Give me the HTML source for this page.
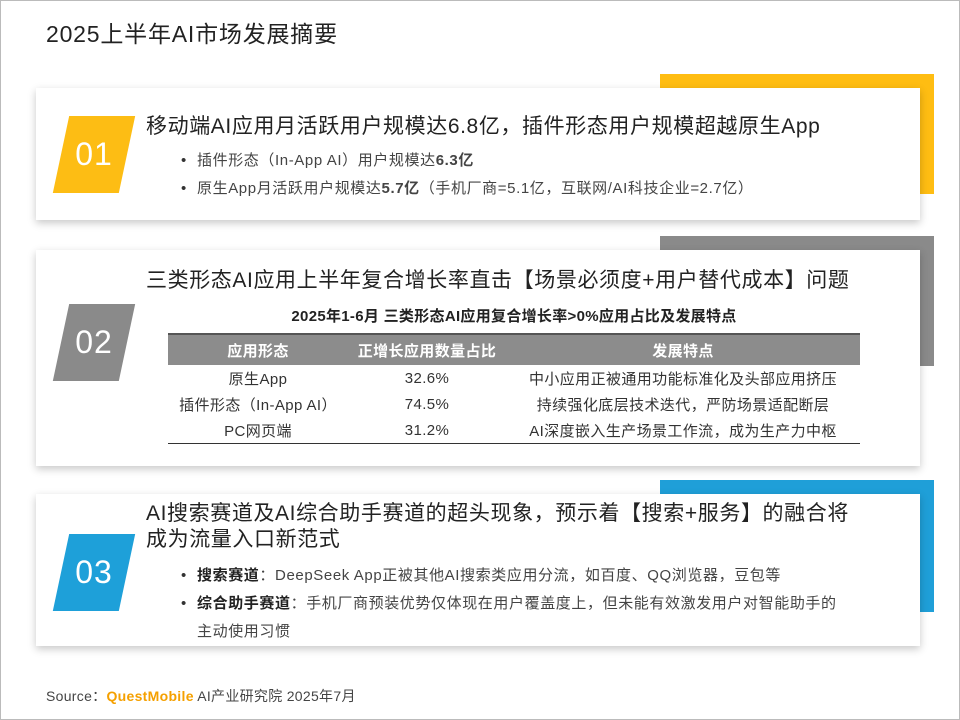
<!DOCTYPE html><html><head><meta charset="utf-8"><style>
body{margin:0;width:960px;height:720px;background:#fff;font-family:"Liberation Sans","Noto Sans CJK SC",sans-serif;color:#222;position:relative;overflow:hidden}
.frame{position:absolute;left:0;top:0;width:958px;height:718px;border:1px solid #bbb}
.abs{position:absolute}
.acc{position:absolute;left:660px;width:274px}
.card{position:absolute;left:36px;width:884px;background:#fff;box-shadow:0 3px 8px rgba(0,0,0,.22)}
.para{position:absolute;width:66px;height:77px}
.para div{position:absolute;inset:0;transform:skewX(-12deg)}
.para span{position:absolute;inset:0;color:#fff;font-size:32px;display:flex;align-items:center;justify-content:center;font-weight:300;letter-spacing:1px}
h2{margin:0;position:absolute;left:110px;font-size:21px;letter-spacing:0.6px;font-weight:normal;color:#222;white-space:nowrap}
ul{margin:0;padding:0;list-style:none;position:absolute;left:161px;font-size:15px;letter-spacing:0.6px;color:#444;white-space:nowrap}
li{position:relative;height:28px;line-height:28px}
li:before{content:"•";position:absolute;left:-16px;color:#333}
table{border-collapse:collapse;font-size:15px;letter-spacing:0.4px;color:#333}
th{background:#8c8c8c;color:#fff;font-weight:bold;height:28px;border-top:2px solid #555}
td{height:24px;text-align:center;white-space:nowrap}
</style></head><body>
<div class="frame"></div>
<div class="abs" style="left:46px;top:15px;font-size:23px;letter-spacing:0.8px;color:#222">2025上半年AI市场发展摘要</div>

<div class="acc" style="top:74px;height:120px;background:#ffbd12"></div>
<div class="card" style="top:88px;height:132px">
 <div class="para" style="left:25px;top:28px"><div style="background:#fdbd14"></div><span>01</span></div>
 <h2 style="top:22px">移动端AI应用月活跃用户规模达6.8亿，插件形态用户规模超越原生App</h2>
 <ul style="top:59px"><li>插件形态（In-App AI）用户规模达<b>6.3亿</b></li><li>原生App月活跃用户规模达<b>5.7亿</b>（手机厂商=5.1亿，互联网/AI科技企业=2.7亿）</li></ul>
</div>

<div class="acc" style="top:236px;height:130px;background:#8a8a8a"></div>
<div class="card" style="top:250px;height:216px">
 <div class="para" style="left:25px;top:54px"><div style="background:#8a8a8a"></div><span>02</span></div>
 <h2 style="top:14px">三类形态AI应用上半年复合增长率直击【场景必须度+用户替代成本】问题</h2>
 <div class="abs" style="left:132px;top:55px;width:692px;text-align:center;font-size:15px;letter-spacing:0.3px;font-weight:bold;color:#222">2025年1-6月 三类形态AI应用复合增长率&gt;0%应用占比及发展特点</div>
 <table class="abs" style="left:132px;top:83px;width:692px;border-bottom:1.5px solid #333">
  <tr><th style="width:178px">应用形态</th><th style="width:156px">正增长应用数量占比</th><th>发展特点</th></tr>
  <tr><td>原生App</td><td>32.6%</td><td>中小应用正被通用功能标准化及头部应用挤压</td></tr>
  <tr><td>插件形态（In-App AI）</td><td>74.5%</td><td>持续强化底层技术迭代，严防场景适配断层</td></tr>
  <tr><td>PC网页端</td><td>31.2%</td><td>AI深度嵌入生产场景工作流，成为生产力中枢</td></tr>
 </table>
</div>

<div class="acc" style="top:480px;height:132px;background:#1f9fd8"></div>
<div class="card" style="top:494px;height:152px">
 <div class="para" style="left:25px;top:40px"><div style="background:#1ea0d9"></div><span>03</span></div>
 <h2 style="top:7px;line-height:26px;width:740px">AI搜索赛道及AI综合助手赛道的超头现象，预示着【搜索+服务】的融合将<br>成为流量入口新范式</h2>
 <ul style="top:68px;width:700px"><li><b style="color:#222">搜索赛道</b>：DeepSeek App正被其他AI搜索类应用分流，如百度、QQ浏览器，豆包等</li><li style="height:auto"><b style="color:#222">综合助手赛道</b>：手机厂商预装优势仅体现在用户覆盖度上，但未能有效激发用户对智能助手的<br>主动使用习惯</li></ul>
</div>

<div class="abs" style="left:46px;top:686px;font-size:14px;letter-spacing:0.3px;color:#444">Source：<span style="color:#f5a000;font-weight:bold">QuestMobile</span> AI产业研究院 2025年7月</div>
</body></html>
